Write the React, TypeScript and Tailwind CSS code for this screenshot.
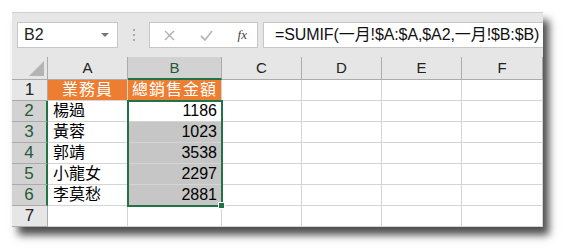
import React from 'react';

const cols = ['A', 'B', 'C', 'D', 'E', 'F'];

const rows: { name: string; amount: string }[] = [
  { name: '楊過', amount: '1186' },
  { name: '黃蓉', amount: '1023' },
  { name: '郭靖', amount: '3538' },
  { name: '小龍女', amount: '2297' },
  { name: '李莫愁', amount: '2881' },
];

const font = { fontFamily: '"Liberation Sans", "Noto Sans CJK TC", sans-serif' };

const App: React.FC = () => {
  return (
    <div className="w-[563px] h-[248px] bg-white pt-[12px] pl-[12px]" style={font}>
      <div className="w-[531px] h-[215px] bg-white shadow-[6px_8px_8px_rgba(0,0,0,0.7)] flex flex-col overflow-hidden">
        {/* Formula bar */}
        <div className="h-[45px] bg-[#e6e6e6] flex items-start pt-[9px] pl-[5px] border-t border-[#d0d0d0]">
          <div className="w-[101px] h-[26px] bg-white border border-[#c6c6c6] flex items-center justify-between pl-[6px] pr-[8px]">
            <span className="text-[16px] text-[#222]">B2</span>
            <span className="w-0 h-0 border-l-[4px] border-r-[4px] border-t-[4px] border-l-transparent border-r-transparent border-t-[#777]" />
          </div>
          <div className="w-[31px] h-[26px] flex flex-col items-center justify-center gap-[3px]">
            <span className="w-[2px] h-[2px] bg-[#aaa]" />
            <span className="w-[2px] h-[2px] bg-[#aaa]" />
            <span className="w-[2px] h-[2px] bg-[#aaa]" />
          </div>
          <div className="w-[109px] h-[26px] bg-white border border-[#c6c6c6] flex items-center pl-[12px] pr-[10px]">
            <svg width="13" height="13" viewBox="0 0 13 13" className="ml-[1px]">
              <path d="M2 2 L11 11 M11 2 L2 11" stroke="#b0b0b0" strokeWidth="1.4" />
            </svg>
            <svg width="15" height="13" viewBox="0 0 15 13" className="ml-[23px]">
              <path d="M2 7 L6 11 L13 2" stroke="#b8b8b8" strokeWidth="1.8" fill="none" />
            </svg>
            <span className="ml-auto text-[13px] italic text-[#444]" style={{ fontFamily: '"Liberation Serif", serif' }}>
              fx
            </span>
          </div>
          <div className="ml-[5px] flex-1 h-[26px] bg-white border border-r-0 border-[#c6c6c6] flex items-center pl-[11px] whitespace-nowrap overflow-hidden">
            <span className="text-[16px] text-[#111] tracking-[-0.1px]">=SUMIF(一月!$A:$A,$A2,一月!$B:$B)</span>
          </div>
        </div>

        {/* Sheet grid */}
        <div className="relative flex-1">
          <div className="grid grid-cols-[36px_80px_94px_80px_80px_80px_81px] grid-rows-[23px_repeat(7,21px)]">
            {/* Header row */}
            <div className="bg-[#e6e6e6] border-r border-b border-[#ababab] relative">
              <svg width="15" height="15" viewBox="0 0 15 15" className="absolute right-[3px] bottom-[3px]">
                <polygon points="15,0 15,15 0,15" fill="#b4b4b4" />
              </svg>
            </div>
            {cols.map((c) => (
              <div
                key={c}
                className={
                  c === 'B'
                    ? 'bg-[#d2d2d2] border-r border-[#ababab] border-b-2 border-b-[#217346] flex items-center justify-center text-[15px] text-[#1e5b3a] pt-[1px]'
                    : 'bg-[#e6e6e6] border-r border-b border-[#ababab] flex items-center justify-center text-[15px] text-[#222]'
                }
              >
                {c}
              </div>
            ))}

            {/* Row 1 */}
            <div className="bg-[#e6e6e6] border-r border-b border-[#ababab] flex items-center justify-center text-[17px] text-[#222]">1</div>
            <div className="bg-[#ed7d31] border-r border-b border-[#d4d4d4] flex items-center justify-center text-[16px] text-white tracking-[1px] whitespace-nowrap">業務員</div>
            <div className="bg-[#ed7d31] border-r border-b border-[#d4d4d4] flex items-center justify-center text-[16px] text-white tracking-[1px] whitespace-nowrap">總銷售金額</div>
            {[0, 1, 2, 3].map((i) => (
              <div key={i} className="border-r border-b border-[#d4d4d4]" />
            ))}

            {/* Data rows */}
            {rows.map((r, i) => (
              <React.Fragment key={r.name}>
                <div className="bg-[#d2d2d2] border-b border-[#ababab] border-r-2 border-r-[#217346] flex items-center justify-center text-[17px] text-[#1e5b3a]">
                  {i + 2}
                </div>
                <div className="border-r border-b border-[#d4d4d4] flex items-center pl-[5px] text-[16px] text-black whitespace-nowrap">{r.name}</div>
                <div
                  className={
                    (i === 0 ? 'bg-white' : 'bg-[#c6c6c6]') +
                    ' border-r border-b border-[#d4d4d4] flex items-center justify-end pr-[4px] text-[16px] text-black'
                  }
                >
                  {r.amount}
                </div>
                {[0, 1, 2, 3].map((j) => (
                  <div key={j} className="border-r border-b border-[#d4d4d4]" />
                ))}
              </React.Fragment>
            ))}

            {/* Row 7 */}
            <div className="bg-[#e6e6e6] border-r border-b border-[#ababab] flex items-center justify-center text-[17px] text-[#222]">7</div>
            {[0, 1, 2, 3, 4, 5].map((j) => (
              <div key={j} className="border-r border-b border-[#d4d4d4]" />
            ))}
          </div>

          {/* Selection outline B2:B6 */}
          <div className="absolute left-[115px] top-[43px] w-[96px] h-[107px] border-2 border-[#217346] pointer-events-none" />
          <div className="absolute left-[206px] top-[145px] w-[7px] h-[7px] bg-[#217346] border border-white" />
        </div>
      </div>
    </div>
  );
};

export default App;
